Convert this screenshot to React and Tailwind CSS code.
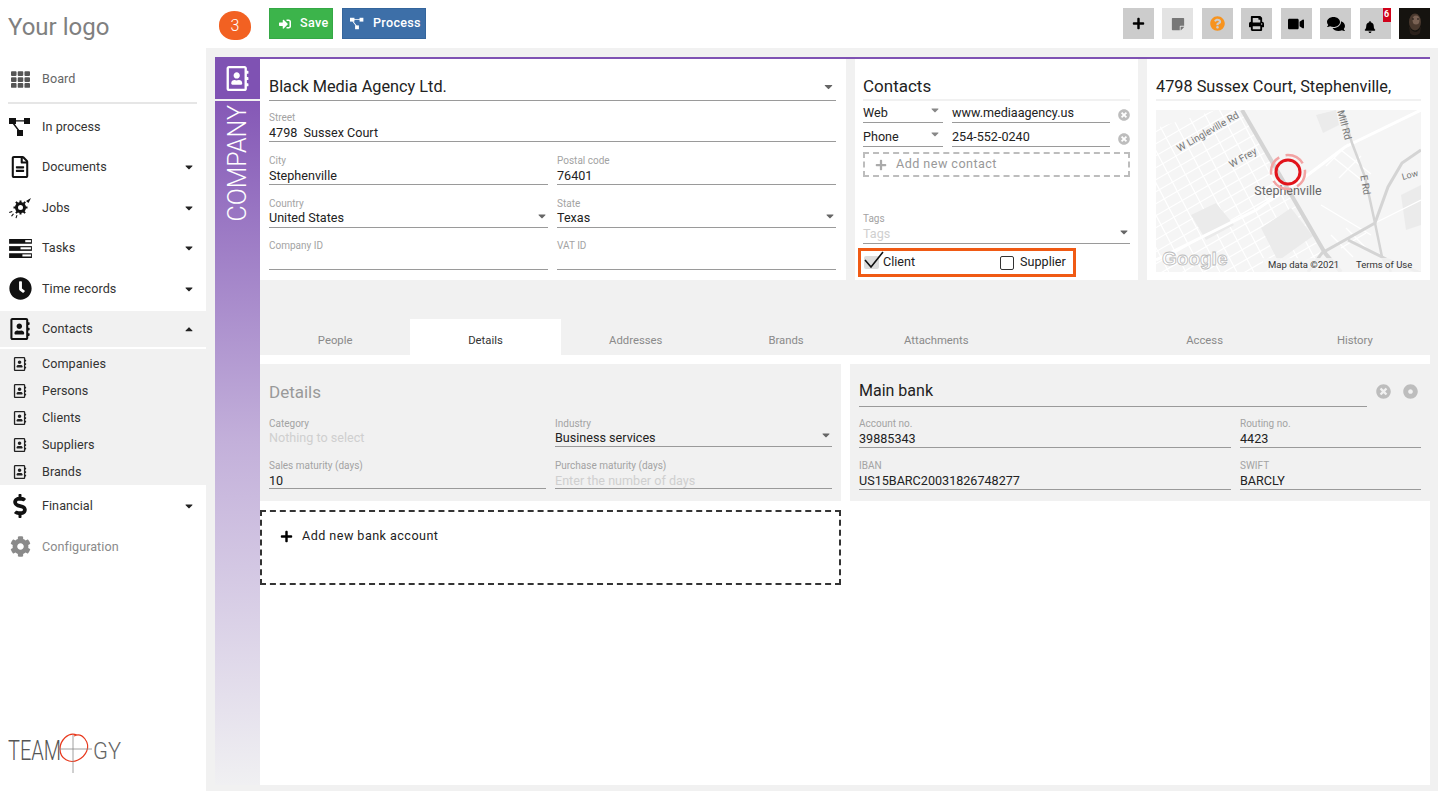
import {
  FaTh, FaRegFileAlt, FaRegAddressBook, FaClock, FaDollarSign, FaCog, FaPrint, FaVideo,
  FaComments, FaBell, FaQuestionCircle, FaPlus, FaStickyNote, FaTimesCircle, FaSignInAlt, FaCaretDown, FaCaretUp, FaDotCircle,
} from 'react-icons/fa';

const ProcessIcon = ({ className }) => (
  <svg viewBox="0 0 22 20" className={className} fill="currentColor">
    <rect x="0" y="1" width="7" height="6" />
    <rect x="15" y="1" width="6" height="6" />
    <rect x="8" y="13" width="6" height="6" />
    <path d="M6 3.200h10v1.400H6zM5 6l5.600 7.500-1.200.8L3.800 7z" />
  </svg>
);

const JobsIcon = ({ className }) => (
  <svg viewBox="0 0 24 24" className={className} fill="currentColor">
    <circle cx="12.500" cy="11.500" r="4" fill="none" stroke="currentColor" strokeWidth="3" />
    <path d="M11.500 4.500h2v2.500h-2zM11.500 16h2v2.500h-2zM5.500 10.500H8v2H5.500zM17 10.500h2.500v2H17zM7.200 6.600l1.400-1.400 1.600 1.600-1.400 1.400zM14.800 16.200l1.400-1.400 1.600 1.600-1.400 1.400zM7.200 16.400l1.600-1.600 1.400 1.400-1.600 1.600zM15 6.800l1.600-1.600 1.400 1.400-1.600 1.600z" />
    <path d="M18 5l5-3-2.500 5zM1 16l3-1 .5 1-3 1zM3 20l2-2.500 1 .5-2 2.500zM7.500 22l1-3 1 .3-1 3z" />
  </svg>
);

const TasksIcon = ({ className }) => (
  <svg viewBox="0 0 24 20" className={className}>
    <rect x="0" y="0" width="24" height="5" fill="#111" />
    <rect x="0" y="7.500" width="24" height="5" fill="#111" />
    <rect x="0" y="15" width="24" height="5" fill="#111" />
    <rect x="17" y="1.200" width="6" height="2.200" fill="#fff" />
    <rect x="12" y="8.700" width="11" height="2.200" fill="#fff" />
    <rect x="14" y="16.200" width="9" height="2.200" fill="#fff" />
  </svg>
);

// logo text stays real text, squeezed to the widths of the original wordmark
const TeamogyLogo = () => (
  <svg viewBox="0 0 125 46" className="h-[46px] w-[125px]">
    <text x="0" y="33" fontFamily="Roboto, sans-serif" fontSize="27" fontWeight="300" fill="#555" textLength="53" lengthAdjust="spacingAndGlyphs">TEAM</text>
    <text x="85" y="32" fontFamily="Roboto, sans-serif" fontSize="23" fontWeight="300" fill="#666" textLength="28" lengthAdjust="spacingAndGlyphs">GY</text>
    <path d="M69 8 C60 4 52 14 52 22 C52 32 62 37 70 33 C78 29 83 20 77 12 C74 8 70 7 66 9" fill="none" stroke="#e8391d" strokeWidth="1.200" />
    <path d="M65 8v38M50 22h34" stroke="#888" strokeWidth="0.800" />
  </svg>
);

const Avatar = () => (
  <svg viewBox="0 0 31 31" className="h-[31px] w-[31px]">
    <rect width="31" height="31" fill="#15130f" />
    <ellipse cx="16" cy="14" rx="6" ry="8.500" fill="#4a392e" />
    <ellipse cx="17" cy="12" rx="3.500" ry="4.500" fill="#7a6254" />
    <path d="M10 17c2 8 10 10 12 0l-1 8c-3 3-8 3-10 0z" fill="#2b211b" />
    <path d="M13 11h2M18 11h2" stroke="#1a1410" strokeWidth="1" />
  </svg>
);

function MapView() {
  const lines = [];
  for (let i = -12; i < 40; i++) {
    lines.push(<path key={`a${i}`} d={`M-80 ${i * 12 + 20} L210 ${i * 12 - 148}`} />);
  }
  for (let i = -8; i < 30; i++) {
    lines.push(<path key={`b${i}`} d={`M${i * 17 - 100} -20 L${i * 17} 170`} />);
  }
  return (
    <svg viewBox="0 0 265 162" className="block h-[162px] w-[265px]">
      <defs>
        <clipPath id="city"><path d="M0 18L60 0H85L170 150L130 162H0Z" /></clipPath>
      </defs>
      <rect width="265" height="162" fill="#f5f5f5" />
      <g clipPath="url(#city)" stroke="#fff" strokeWidth="1.200" fill="none">{lines}</g>
      <path d="M35 105l25-12 18 22-28 15zM105 118l30-20 22 28-35 25zM160 5l20-5 3 15-16 8zM245 85l20-10v40l-15 5z" fill="#ebebeb" />
      <path d="M265 0L189 37L149 67L100 100L0 150" fill="none" stroke="#fff" strokeWidth="3" />
      <path d="M219 113L265 90M165 95L215 125M185 40l30 24M178 48l30 24M192 34l-22 22M205 46l-22 22M175 125l22 22M190 118l22 22M185 138l25-15" fill="none" stroke="#fff" strokeWidth="1.300" />
      <path d="M86 0L169 143L185 162" fill="none" stroke="#d4d4d4" strokeWidth="4" />
      <path d="M186 0L196 33L209 67L219 113L226 147L235 162" fill="none" stroke="#d4d4d4" strokeWidth="2.500" />
      <path d="M265 40L246 53L232 77L219 113L189 130L166 143L152 162M192 130L232 150L265 163" fill="none" stroke="#d4d4d4" strokeWidth="3" />
      <g fontFamily="Roboto, sans-serif" fill="#777">
        <text x="52" y="25" fontSize="10" textAnchor="middle" transform="rotate(-30 52 22)">W Lingleville Rd</text>
        <text x="87" y="51" fontSize="10" textAnchor="middle" transform="rotate(-30 87 48)">W Frey</text>
        <text x="188" y="18" fontSize="10" textAnchor="middle" transform="rotate(75 188 15)">Mill Rd</text>
        <text x="209" y="78" fontSize="10" textAnchor="middle" transform="rotate(80 209 75)">E Rd</text>
        <text x="254" y="68" fontSize="9" textAnchor="middle" transform="rotate(-15 254 65)">Low</text>
        <text x="132" y="85" fontSize="12.500" fill="#666" textAnchor="middle">Stephenville</text>
      </g>
      <circle cx="132" cy="62" r="17" fill="none" stroke="#f2a3a3" strokeWidth="2.500" strokeDasharray="20 6.700" strokeDashoffset="3" />
      <circle cx="132" cy="62" r="12" fill="none" stroke="#e2141c" strokeWidth="3" />
      <rect x="107" y="148" width="158" height="14" fill="#f5f5f5" fillOpacity="0.800" />
      <text x="112" y="158" fontFamily="Roboto, sans-serif" fontSize="9.500" fill="#333">Map data ©2021</text>
      <text x="200" y="158" fontFamily="Roboto, sans-serif" fontSize="9.500" fill="#333">Terms of Use</text>
      <text x="6" y="155" fontFamily="Liberation Sans, sans-serif" fontSize="19" fontWeight="700" fill="#fff" stroke="#bbb" strokeWidth="0.800">Google</text>
    </svg>
  );
}

function NavItem({ icon, label, caret, muted, dim, active }) {
  return (
    <div className={`flex items-center ${active ? 'my-[2px] h-[36px] bg-[#f1f1f1]' : 'h-[40.5px]'}`}>
      <div className={`mr-[2px] flex w-[40px] justify-center ${dim ? 'text-[#8a8a8a]' : 'text-[#111]'}`}>{icon}</div>
      <span className={`flex-1 pt-[1px] text-[12.600px] tracking-[0.05px] ${dim ? 'text-[#8a8a8a]' : muted ? 'text-[#666]' : 'text-[#333]'}`}>{label}</span>
      {caret === 'down' && <FaCaretDown className="mr-[11px] text-[12px] text-[#222]" />}
      {caret === 'up' && <FaCaretUp className="mr-[11px] text-[12px] text-[#222]" />}
    </div>
  );
}

function SubItem({ label }) {
  return (
    <div className="flex h-[27px] items-center">
      <div className="mr-[2px] flex w-[40px] justify-center"><FaRegAddressBook className="text-[14px] text-[#222]" /></div>
      <span className="pt-[1px] text-[12.600px] tracking-[0.05px] text-[#333]">{label}</span>
    </div>
  );
}

function Sidebar() {
  return (
    <aside className="flex w-[206px] shrink-0 flex-col bg-white">
      <div className="h-[59px] pl-[8px] pt-[11px] text-[24px] leading-[32px] text-[#808080]">Your logo</div>
      <NavItem icon={<FaTh className="text-[19px] text-[#555]" />} label="Board" muted />
      <div className="mx-[8px] mb-[3px] mt-[2px] h-[2px] w-[189px] bg-[#e6e6e6]" />
      <NavItem icon={<ProcessIcon className="h-[20px] w-[22px]" />} label="In process" />
      <NavItem icon={<FaRegFileAlt className="text-[22px]" />} label="Documents" caret="down" />
      <NavItem icon={<JobsIcon className="h-[24px] w-[24px]" />} label="Jobs" caret="down" />
      <NavItem icon={<TasksIcon className="h-[19px] w-[23px]" />} label="Tasks" caret="down" />
      <NavItem icon={<FaClock className="text-[23px]" />} label="Time records" caret="down" />
      <NavItem icon={<FaRegAddressBook className="text-[22px]" />} label="Contacts" caret="up" active />
      <div className="bg-[#f1f1f1] pt-[1px]">
        {['Companies', 'Persons', 'Clients', 'Suppliers', 'Brands'].map((s) => <SubItem key={s} label={s} />)}
      </div>
      <div className="mt-[1px]">
        <NavItem icon={<FaDollarSign className="text-[24px]" />} label="Financial" caret="down" />
        <NavItem icon={<FaCog className="text-[21px]" />} label="Configuration" dim />
      </div>
      <div className="mt-auto pb-[18px] pl-[8px]"><TeamogyLogo /></div>
    </aside>
  );
}

function IconBtn({ children, light }) {
  return (
    <div className={`relative flex h-[31px] w-[31px] items-center justify-center ${light ? 'bg-[#e3e3e3]' : 'bg-[#cccccc]'}`}>{children}</div>
  );
}

function TopBar() {
  return (
    <header className="flex h-[48px] shrink-0 items-start pr-[8px] pt-[8px]">
      <div className="ml-[13px] mt-[3px] flex h-[29px] w-[32px] items-center justify-center rounded-[50%_55%_45%_50%] bg-[#f26122] text-[16px] font-light text-white">3</div>
      <button className="ml-[18px] flex h-[31px] w-[64px] items-center gap-[9px] border border-[#35a846] bg-[#3cb44b] pl-[9px] text-[12.600px] font-medium tracking-[0.3px] text-white">
        <FaSignInAlt className="text-[12px]" />Save
      </button>
      <button className="ml-[9px] flex h-[31px] w-[84px] items-center gap-[9px] border border-[#34659c] bg-[#3d6fa8] pl-[7px] text-[12.600px] font-medium tracking-[0.3px] text-white">
        <ProcessIcon className="h-[13px] w-[14px]" />Process
      </button>
      <div className="ml-auto flex gap-[8.500px]">
        <IconBtn><FaPlus className="text-[13px] text-black" /></IconBtn>
        <IconBtn light><FaStickyNote className="text-[14px] text-[#777]" /></IconBtn>
        <IconBtn><FaQuestionCircle className="text-[15px] text-[#f7931e]" /></IconBtn>
        <IconBtn><FaPrint className="text-[15px] text-black" /></IconBtn>
        <IconBtn><FaVideo className="text-[16px] text-black" /></IconBtn>
        <IconBtn><FaComments className="text-[18px] text-black" /></IconBtn>
        <IconBtn>
          <FaBell className="-ml-[10px] mt-[7px] text-[12px] text-black" />
          <span className="absolute right-[0px] top-[0px] flex h-[14px] w-[8px] items-center justify-center bg-[#d0021b] text-[9px] font-bold text-white">6</span>
        </IconBtn>
        <Avatar />
      </div>
    </header>
  );
}

function Field({ label, value, placeholder, select, h = 'h-[30px]', valueGap = 'mt-[2px]', className = '' }) {
  return (
    <div className={`relative border-b border-[#9a9a9a] ${h} ${className}`}>
      <div className="h-[11px] text-[10px] leading-[11px] text-[#a3a3a3]">{label}</div>
      <div className={`${valueGap} h-[15px] text-[12.600px] leading-[15px] ${placeholder ? 'text-[#cfcfcf]' : 'text-[#222]'}`}>{value || placeholder || ''}</div>
      {select && <FaCaretDown className="absolute bottom-[5px] right-[0px] text-[12px] text-[#666]" />}
    </div>
  );
}

function Rail() {
  return (
    <div className="flex w-[45px] shrink-0 flex-col">
      <div className="flex h-[42px] items-center justify-center bg-[#7f52b3]">
        <FaRegAddressBook className="text-[25px] text-white" />
      </div>
      <div className="mt-[2px] flex-1 bg-gradient-to-b from-[#8558b6] via-[#c3b0da] to-[#f0f0f2]">
        <div className="flex justify-center pt-[4px]">
          <span className="rotate-180 text-[25px] font-light leading-none text-white [writing-mode:vertical-rl]">COMPANY</span>
        </div>
      </div>
    </div>
  );
}

function CompanyCard() {
  return (
    <section className="w-[586px] shrink-0 bg-white pl-[9px] pr-[10px]">
      <div className="relative flex h-[42px] items-end border-b border-[#9a9a9a] pb-[1px] text-[16.300px] leading-[24px] text-[#222]">
        Black Media Agency Ltd.
        <FaCaretDown className="absolute bottom-[7px] right-[1px] text-[13px] text-[#666]" />
      </div>
      <Field label="Street" value="4798  Sussex Court" className="mt-[11px] whitespace-pre" />
      <div className="mt-[13px] grid grid-cols-2 gap-x-[9px]">
        <Field label="City" value="Stephenville" />
        <Field label="Postal code" value="76401" />
      </div>
      <div className="mt-[13px] grid grid-cols-2 gap-x-[9px]">
        <Field label="Country" value="United States" select valueGap="mt-[1px]" />
        <Field label="State" value="Texas" select valueGap="mt-[1px]" />
      </div>
      <div className="mt-[12px] grid grid-cols-2 gap-x-[9px]">
        <Field label="Company ID" />
        <Field label="VAT ID" />
      </div>
    </section>
  );
}

function ContactRow({ type, value, className = '' }) {
  return (
    <div className={`flex h-[22px] items-end ${className}`}>
      <div className="relative h-[19px] w-[80px] border-b border-[#9a9a9a] text-[12.600px] leading-[18px] text-[#222]">
        {type}
        <FaCaretDown className="absolute right-[2px] top-[0px] text-[12px] text-[#888]" />
      </div>
      <div className="ml-[9px] h-[19px] w-[158px] border-b border-[#9a9a9a] text-[12.600px] leading-[18px] text-[#222]">{value}</div>
      <FaTimesCircle className="mb-[2px] ml-[8px] text-[12px] text-[#bdbdbd]" />
    </div>
  );
}

function ContactsCard() {
  return (
    <section className="w-[283px] shrink-0 bg-white px-[8px]">
      <div className="flex h-[42px] items-end border-b-2 border-[#f1f1f1] pb-[1px] text-[17px] leading-[24px] text-[#222]">Contacts</div>
      <ContactRow type="Web" value="www.mediaagency.us" />
      <ContactRow type="Phone" value="254-552-0240" className="mt-[2px]" />
      <div className="mt-[5px] flex h-[25px] items-center border-2 border-dashed border-[#bdbdbd] pl-[10px] text-[12.600px] tracking-[0.45px] text-[#999]">
        <FaPlus className="mr-[9px] text-[12px] text-[#aaa]" />Add new contact
      </div>
      <div className="mt-[36px]">
        <Field label="Tags" placeholder="Tags" select h="h-[31px]" />
      </div>
      <div className="-mx-[5px] mt-[4px] flex h-[29px] w-[218px] items-center border-[3px] border-[#f05a14] pl-[3px] text-[12.600px] text-[#222]">
        <span className="relative mr-[4px] h-[13px] w-[15px] rounded-[2px] bg-[#dcdcdc]">
          <svg viewBox="0 0 20 18" className="absolute -top-[5px] left-[0px] h-[18px] w-[20px]">
            <path d="M1 9l6 7L19 1" fill="none" stroke="#111" strokeWidth="1.600" />
          </svg>
        </span>
        Client
        <span className="ml-[85px] mr-[6px] h-[14px] w-[14px] rounded-[2px] border border-[#333] bg-white" />
        Supplier
      </div>
    </section>
  );
}

function MapCard() {
  return (
    <section className="flex-1 bg-white px-[9px]">
      <div className="mb-[9px] flex h-[42px] items-end border-b-2 border-[#f1f1f1] text-[16.300px] leading-[24px] text-[#222]">4798 Sussex Court, Stephenville,</div>
      <MapView />
    </section>
  );
}

function Tabs() {
  const left = ['People', 'Details', 'Addresses', 'Brands', 'Attachments'];
  const right = ['Access', 'History'];
  const tab = (t) => (
    <div key={t} className={`flex h-[36px] w-[150.300px] items-center justify-center pt-[8px] text-[11.300px] ${t === 'Details' ? 'bg-white text-[#333]' : 'text-[#8a8a8a]'}`}>{t}</div>
  );
  return (
    <div className="mt-[39px] flex justify-between">
      <div className="flex">{left.map(tab)}</div>
      <div className="flex">{right.map(tab)}</div>
    </div>
  );
}

function DetailsPanel() {
  return (
    <div className="h-[137px] w-[581px] bg-[#f1f1f1] px-[9px]">
      <div className="flex h-[46px] items-end pb-[6px] text-[17px] leading-[24px] text-[#999]">Details</div>
      <div className="mt-[8px] grid grid-cols-2 gap-x-[9px]">
        <Field label="Category" placeholder="Nothing to select" h="h-[29px]" valueGap="mt-[1px]" className="border-b-0" />
        <Field label="Industry" value="Business services" select h="h-[29px]" valueGap="mt-[1px]" />
      </div>
      <div className="mt-[13px] grid grid-cols-2 gap-x-[9px]">
        <Field label="Sales maturity (days)" value="10" h="h-[29px]" />
        <Field label="Purchase maturity (days)" placeholder="Enter the number of days" h="h-[29px]" />
      </div>
    </div>
  );
}

function BankPanel() {
  return (
    <div className="ml-[9px] h-[137px] flex-1 bg-[#f1f1f1] px-[9px]">
      <div className="flex h-[43px] items-end">
        <div className="w-[508px] border-b border-[#9a9a9a] pb-[2px] text-[16px] leading-[26px] text-[#222]">Main bank</div>
        <FaTimesCircle className="mb-[8px] ml-[9px] text-[15px] text-[#bdbdbd]" />
        <FaDotCircle className="mb-[8px] ml-[12px] text-[15px] text-[#bdbdbd]" />
      </div>
      <div className="mt-[11px] flex gap-x-[9px]">
        <Field label="Account no." value="39885343" className="w-[372px]" />
        <Field label="Routing no." value="4423" className="flex-1" />
      </div>
      <div className="mt-[12px] flex gap-x-[9px]">
        <Field label="IBAN" value="US15BARC20031826748277" className="w-[372px]" />
        <Field label="SWIFT" value="BARCLY" className="flex-1" />
      </div>
    </div>
  );
}

export default function App() {
  return (
    <div className="flex h-[791px] w-[1438px] overflow-hidden bg-white font-['Roboto',sans-serif]">
      <Sidebar />
      <div className="flex min-w-0 flex-1 flex-col">
        <TopBar />
        <main className="flex flex-1 bg-[#f1f1f1] pb-[6px] pl-[9px] pr-[8px] pt-[9px]">
          <Rail />
          <div className="flex flex-1 flex-col border-t-2 border-[#7f52b3]">
            <div className="flex h-[221px] gap-x-[9px]">
              <CompanyCard />
              <ContactsCard />
              <MapCard />
            </div>
            <Tabs />
            <div className="flex-1 bg-white pt-[9px]">
              <div className="flex">
                <DetailsPanel />
                <BankPanel />
              </div>
              <div className="mt-[9px] flex h-[75px] w-[581px] items-start border-2 border-dashed border-[#333] pl-[18px] pt-[15px] text-[12.600px] tracking-[0.45px] text-[#222]">
                <FaPlus className="mr-[9px] mt-[3px] text-[13px] text-black" />Add new bank account
              </div>
            </div>
          </div>
        </main>
      </div>
    </div>
  );
}
